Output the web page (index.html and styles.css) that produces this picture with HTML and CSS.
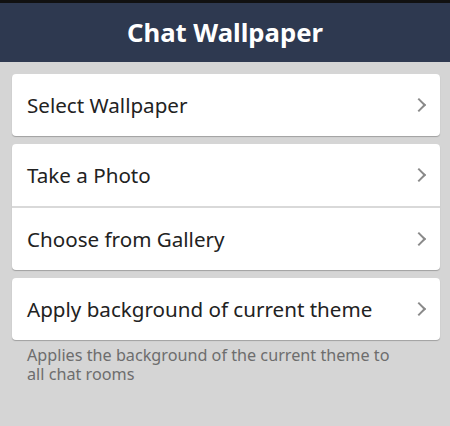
FILE: index.html
```html
<!DOCTYPE html>
<html lang="en">
  <head>
    <meta charset="UTF-8" />
    <meta name="viewport" content="width=device-width, initial-scale=1.0" />
    <title>Chat Wallpaper</title>
    <link rel="stylesheet" href="styles.css">
  </head>
  <body>
    <div class="statusbar"></div>
    <header class="header">
      <h1 class="title">Chat Wallpaper</h1>
    </header>

    <main class="content">
      <div class="group">
        <a class="item" href="#">
          <span>Select Wallpaper</span>
          <span class="chevron"></span>
        </a>
      </div>

      <div class="group">
        <a class="item" href="#">
          <span>Take a Photo</span>
          <span class="chevron"></span>
        </a>
        <a class="item" href="#">
          <span>Choose from Gallery</span>
          <span class="chevron"></span>
        </a>
      </div>

      <div class="group">
        <a class="item" href="#">
          <span>Apply background of current theme</span>
          <span class="chevron"></span>
        </a>
      </div>
      <p class="note">Applies the background of the current theme to all chat rooms</p>
    </main>
  </body>
</html>
```

FILE: styles.css
```css
body {
  font-family: "Noto Sans", "Open Sans", sans-serif;
  margin: 0;
  padding: 0;
  background-color: #d5d5d5;
  color: #222;
}

.statusbar {
  height: 3px;
  background-color: #111;
}

.header {
  height: 59px;
  background-color: #2e3950;
  display: flex;
  align-items: center;
  justify-content: center;
}

.title {
  margin: 0;
  color: #fff;
  font-size: 25.7px;
  font-weight: bold;
}

.content {
  padding: 12px 10px 0 12px;
}

.group {
  background-color: #fff;
  border-radius: 4px;
  box-shadow: 0 1px 1px rgba(0, 0, 0, 0.25);
  margin-bottom: 8px;
}

.item {
  display: flex;
  align-items: center;
  justify-content: space-between;
  height: 62px;
  padding: 0 14px 0 15px;
  color: #222;
  font-size: 20.6px;
  text-decoration: none;
}

.item + .item {
  border-top: 2px solid #d9d9d9;
}

.chevron {
  width: 8px;
  height: 8px;
  border-top: 2px solid #8a8a8a;
  border-right: 2px solid #8a8a8a;
  transform: rotate(45deg);
  margin-right: 2px;
}

.note {
  margin: -2px 0 0;
  padding: 0 30px 0 15px;
  color: #6d6d6d;
  font-size: 16.2px;
  line-height: 19px;
}
```
